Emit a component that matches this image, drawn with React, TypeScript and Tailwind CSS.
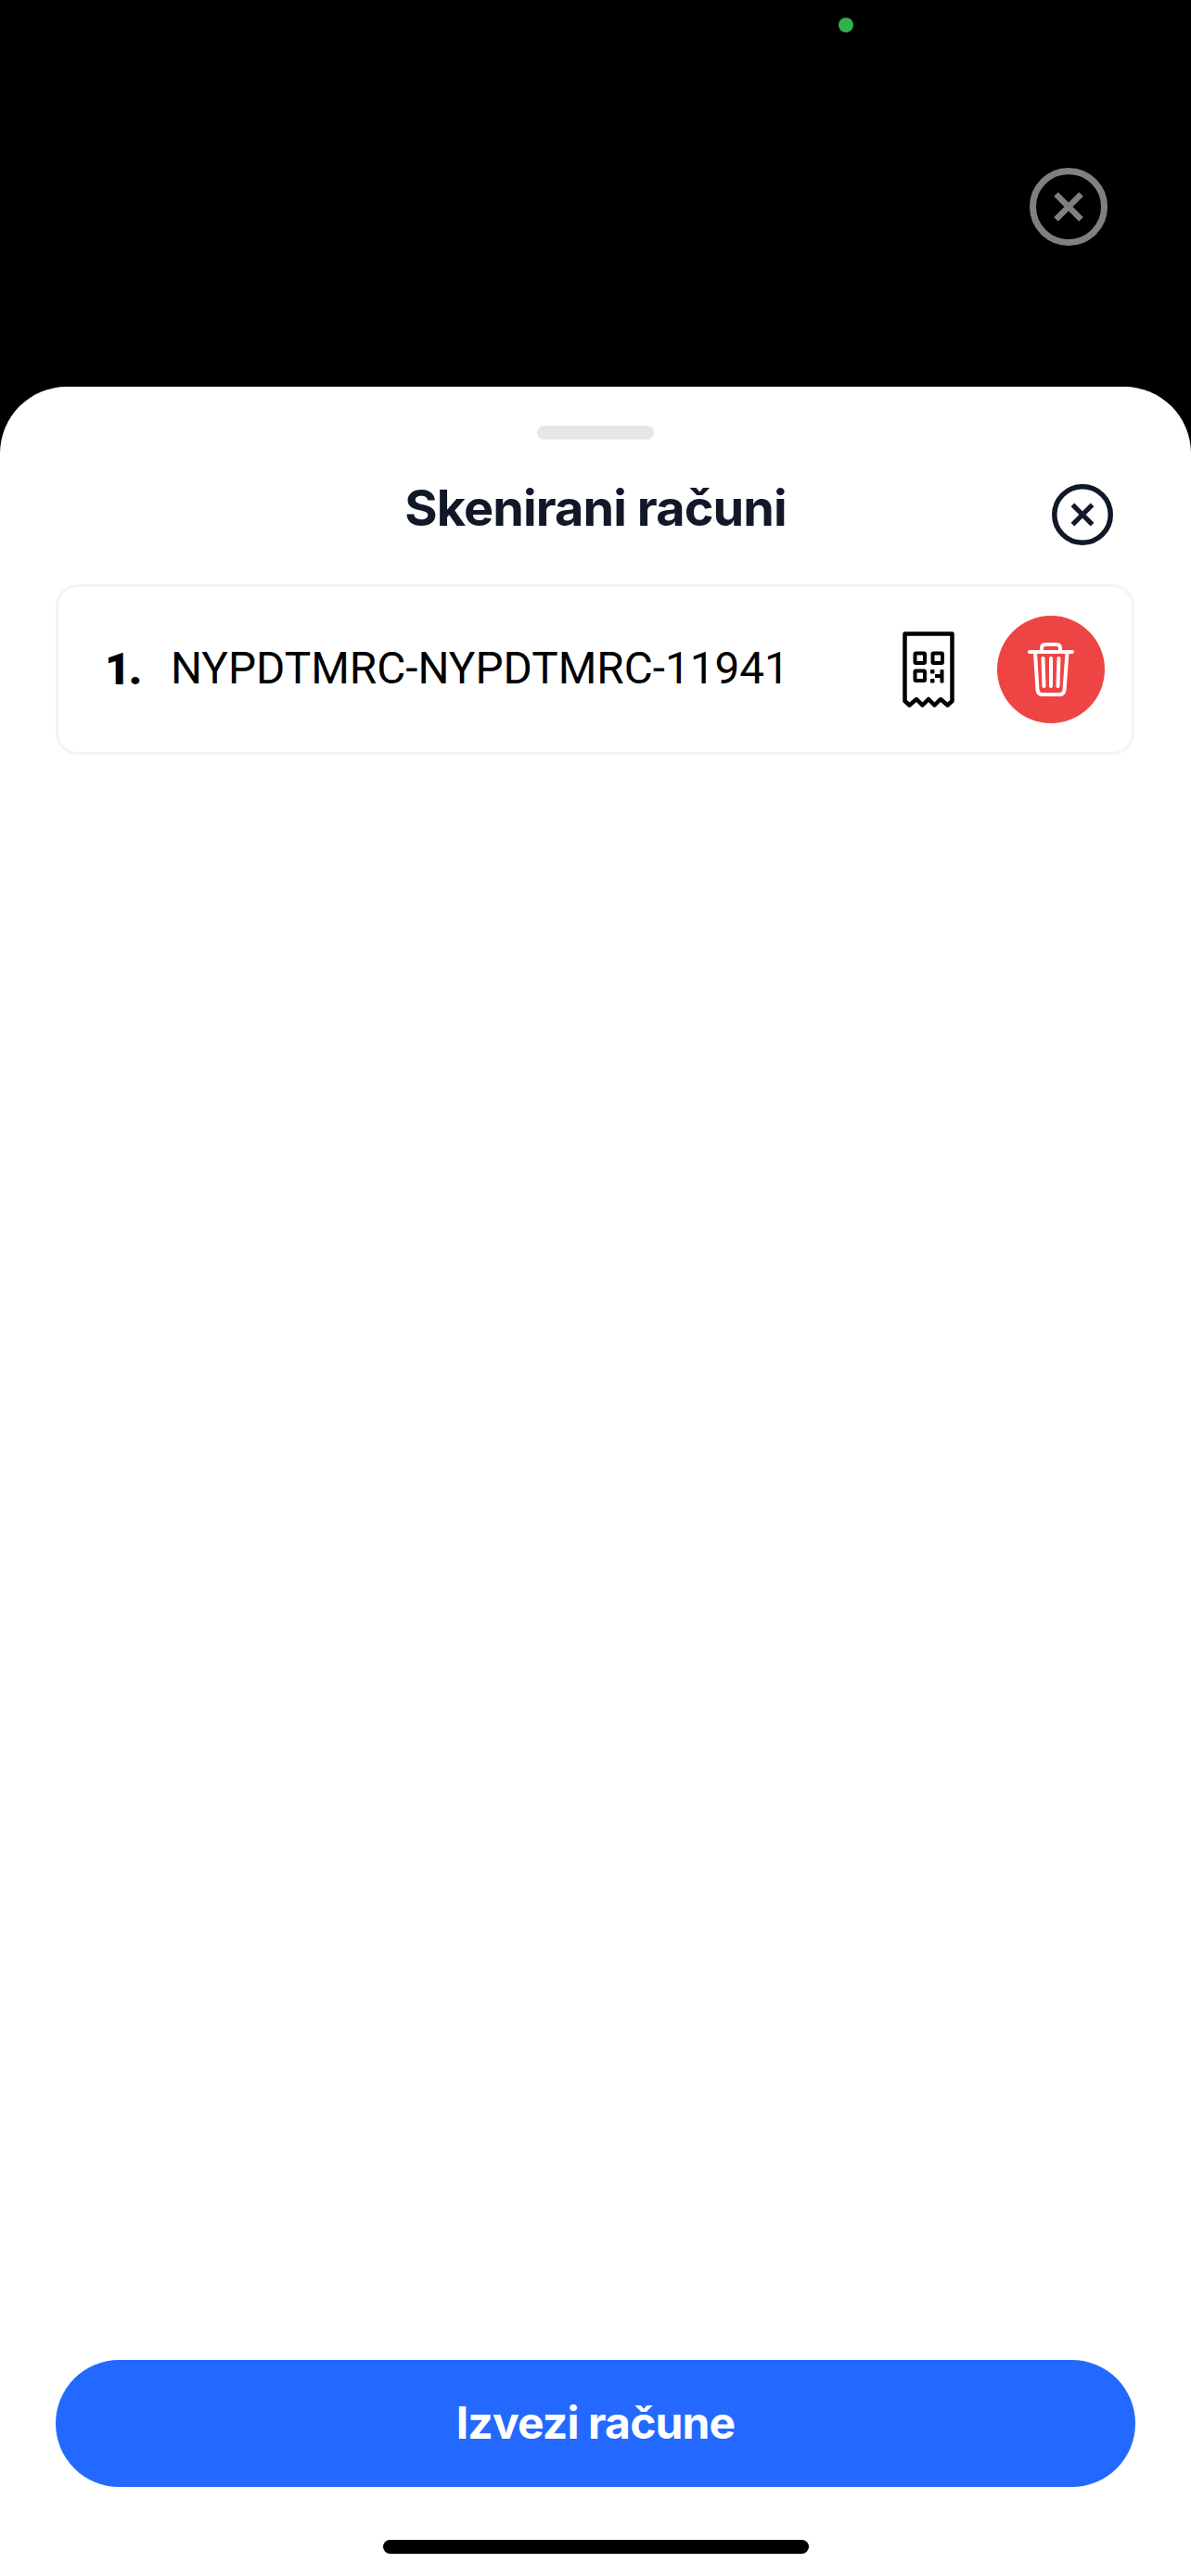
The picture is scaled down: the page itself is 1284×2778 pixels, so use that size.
import React from 'react';

const CloseCircle: React.FC<{ className: string }> = ({ className }) => (
  <svg viewBox="0 0 84 84" fill="none" stroke="currentColor" className={className}>
    <circle cx="42" cy="42" r="38.5" strokeWidth="7" />
    <path d="M28.500 28.500 L55.500 55.500 M55.500 28.500 L28.500 55.500" strokeWidth="6.500" />
  </svg>
);

const ReceiptIcon: React.FC = () => (
  <svg viewBox="0 0 56 82" fill="none" className="h-[82px] w-[56px] shrink-0">
    <path
      d="M2.500 2.500 H53.500 V75 L48.500 79.500 L41 73 L34.500 79.500 L28 73 L21.500 79.500 L15 73 L7.500 79.500 L2.500 75 Z"
      stroke="#000"
      strokeWidth="4.500"
      strokeLinejoin="round"
    />
    <g stroke="#000" strokeWidth="4">
      <rect x="13.500" y="23.500" width="10.500" height="10.500" rx="1" />
      <rect x="32.500" y="23.500" width="10.500" height="10.500" rx="1" />
      <rect x="13.500" y="42.500" width="10.500" height="10.500" rx="1" />
    </g>
    <g fill="#000">
      <rect x="30" y="41" width="4.500" height="4.500" rx="1" />
      <rect x="30" y="51" width="4.500" height="4.500" rx="1" />
      <rect x="35" y="46" width="6" height="4" />
      <rect x="40.500" y="41" width="4" height="14.500" rx="1" />
    </g>
  </svg>
);

const TrashIcon: React.FC = () => (
  <svg viewBox="0 0 50 58" fill="none" stroke="#fff" strokeWidth="4" strokeLinecap="round" className="h-[58px] w-[50px]">
    <path d="M2 10 H48" />
    <path d="M15 9 V6 Q15 2 19 2 H31 Q35 2 35 6 V9" />
    <path d="M8 11 L10.500 51 Q11 56 16 56 H34 Q39 56 39.500 51 L42.500 11" />
    <path d="M16.500 17 L17.500 47 M25 17 V47 M33.500 17 L32.500 47" />
  </svg>
);

export default function App() {
  return (
    <div className="flex h-[2778px] w-[1284px] flex-col bg-black font-['Inter',sans-serif]">
      {/* camera view behind the sheet */}
      <div className="h-[417px] shrink-0 pt-[19px]">
        <div className="ml-[904px] h-4 w-4 rounded-full bg-[#30b14c]" />
        <div className="mt-[146px] ml-[1110px] text-[#808080]">
          <CloseCircle className="h-[84px] w-[84px]" />
        </div>
      </div>

      <div className="flex flex-1 flex-col rounded-t-[72px] bg-white">
        <div className="mx-auto mt-[42px] h-[15px] w-[126px] rounded-full bg-[#e5e7eb]" />

        <div className="relative mt-[38px] flex h-[72px] items-center justify-center">
          <h1 className="text-[54px] leading-[72px] font-bold tracking-[-0.9px] text-[#111827]">Skenirani računi</h1>
          <div className="absolute top-[10px] right-[84px] text-[#111827]">
            <CloseCircle className="h-[66px] w-[66px]" />
          </div>
        </div>

        <div className="mt-[46px] mr-[61px] ml-[60px] flex h-[184px] items-center rounded-[24px] border-[3px] border-[#f3f4f6] pr-[29px] pl-[50px]">
          <span className="w-[71px] font-['Roboto',sans-serif] text-[48px] font-black tracking-[-2px] text-black">1.</span>
          <span className="flex-1 font-['Roboto',sans-serif] text-[47.700px] text-black">NYPDTMRC-NYPDTMRC-11941</span>
          <ReceiptIcon />
          <button className="ml-[46px] flex h-[116px] w-[116px] items-center justify-center rounded-full bg-[#ef4444]">
            <TrashIcon />
          </button>
        </div>

        <div className="flex-1" />

        <button className="mx-[60px] h-[137px] rounded-full bg-[#2469ff] pb-[2px] text-[48px] font-bold tracking-[-0.85px] text-white">
          Izvezi račune
        </button>

        <div className="mx-auto mt-[57px] mb-[24px] h-[15px] w-[459px] rounded-full bg-black" />
      </div>
    </div>
  );
}
